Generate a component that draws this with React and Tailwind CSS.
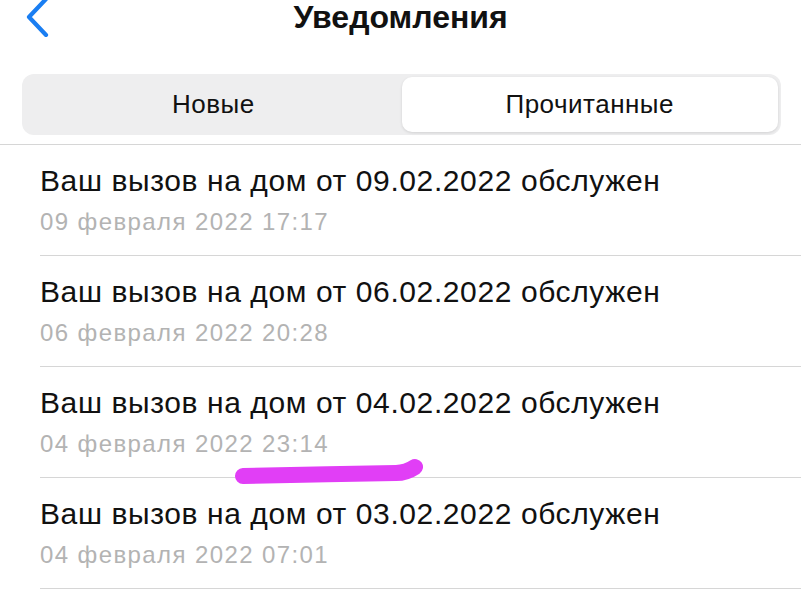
import React from 'react';

const items = [
  { title: 'Ваш вызов на дом от 09.02.2022 обслужен', date: '09 февраля 2022 17:17' },
  { title: 'Ваш вызов на дом от 06.02.2022 обслужен', date: '06 февраля 2022 20:28' },
  { title: 'Ваш вызов на дом от 04.02.2022 обслужен', date: '04 февраля 2022 23:14', marked: true },
  { title: 'Ваш вызов на дом от 03.02.2022 обслужен', date: '04 февраля 2022 07:01' },
];

const BackChevron = () => (
  <svg width="26" height="40" viewBox="0 0 26 40" className="absolute left-[24px] top-[-3px]">
    <path d="M22 2 L5 20 L22 38" fill="none" stroke="#1a7ef2" strokeWidth="4.2" strokeLinecap="round" strokeLinejoin="round" />
  </svg>
);

// hand-drawn highlighter stroke over the third row
const Marker = () => (
  <svg width="200" height="34" viewBox="0 0 200 34" className="pointer-events-none absolute left-[188px] top-[86px]">
    <path d="M15 23 C60 22 120 21 168 20 C178 20 184 16 187 14" fill="none" stroke="#e13ef6" strokeWidth="16" strokeLinecap="round" />
  </svg>
);

export default function App() {
  return (
    <div className="relative h-[600px] w-[801px] overflow-hidden bg-white font-['Liberation_Sans',Arial,sans-serif]">
      <div className="relative flex h-[34px] items-center justify-center">
        <BackChevron />
        <h1 className="text-[32px] font-bold text-[#111]">Уведомления</h1>
      </div>

      <div className="ml-[22px] mr-[20px] mt-[40px] flex h-[61px] rounded-[12px] bg-[#eeeeef] p-[3px]">
        <button className="flex flex-1 items-center justify-center text-[26px] tracking-[0.5px] text-[#111]">Новые</button>
        <button className="flex flex-1 items-center justify-center rounded-[10px] bg-white text-[26px] tracking-[0.5px] text-[#111] shadow-[0_1px_3px_rgba(0,0,0,0.12)]">
          Прочитанные
        </button>
      </div>

      <div className="mt-[9px] border-b border-[#d6d6d6]" />

      <ul>
        {items.map((it, i) => (
          <li key={i} className="relative ml-[40px] h-[111px] border-b border-[#d6d6d6] pt-[18px]">
            <div className="text-[30px] leading-[35px] tracking-[0.6px] text-[#111]">{it.title}</div>
            <div className="mt-[10px] text-[24px] leading-[28px] tracking-[1.4px] text-[#b3b3b3]">{it.date}</div>
            {it.marked && <Marker />}
          </li>
        ))}
      </ul>
    </div>
  );
}
